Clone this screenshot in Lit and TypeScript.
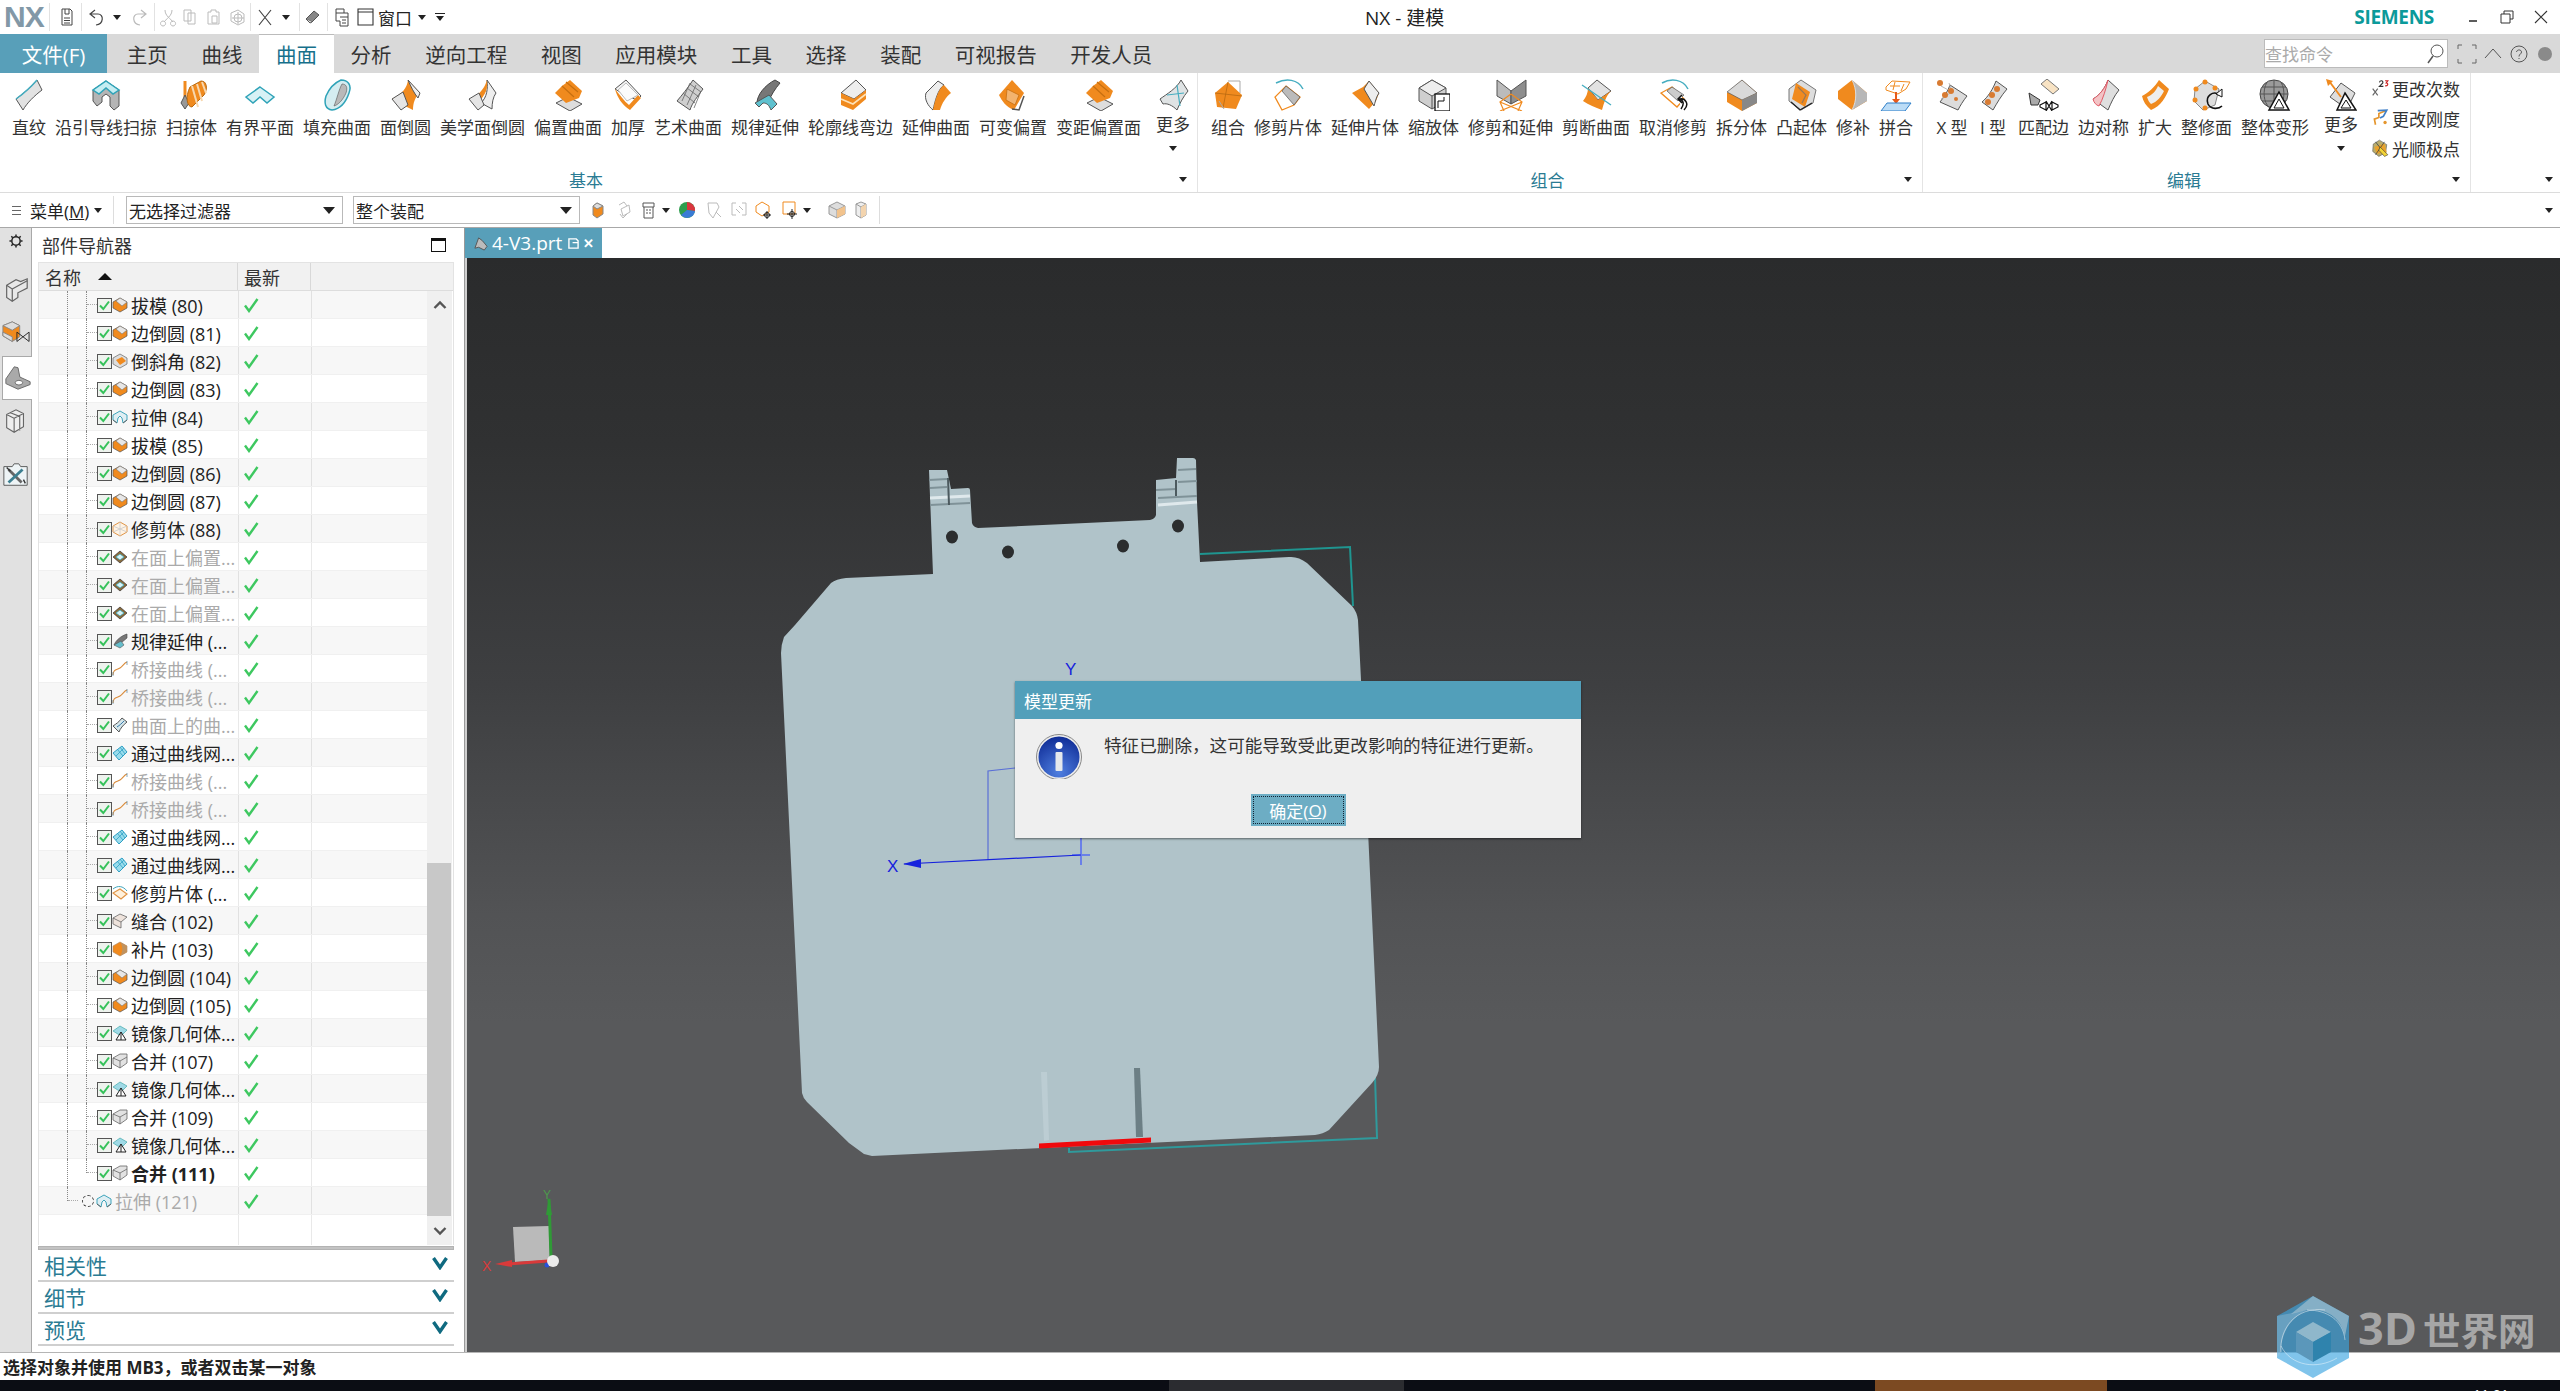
import { LitElement, html, css, svg } from 'lit';
import { customElement } from 'lit/decorators.js';

const O = '#f08a1e';
const D = '#555';
const T = '#45adc0';

// ribbon icons, 32x32
const ICONS: Record<string, any> = {
  ruled: svg`<path d="M24 1L29 11C21 17 14 24 10 31L3 20C10 15 18 8 24 1Z" fill="#e2e2e2" stroke="${D}"/><path d="M24 1C18 8 10 15 3 20" fill="none" stroke="${T}" stroke-width="1.5"/>`,
  guide: svg`<path d="M16 2L29 11V27L24 31L20 27V18L16 15L12 18V23L7 27L3 22V11Z" fill="#b5b5b5" stroke="${D}"/><path d="M16 2L29 11L23 15L16 9L9 15L3 11Z" fill="#c5edf2" stroke="#2fa3b8" stroke-width="1.5"/>`,
  swept: svg`<path d="M9 2V18" stroke="${O}" stroke-width="3"/><path d="M9 16L13 24L9 30L5 24Z" fill="#999" stroke="${D}"/><path d="M14 8L25 2C31 2 32 10 28 16L16 28C11 28 9 18 14 8Z" fill="${O}" stroke="#b96a10"/><path d="M16 7L22 28M21 5L26 22M26 3L30 14" stroke="#f7d7ae" stroke-width="2"/>`,
  plane: svg`<path d="M16 8L30 18L23 24L16 18L9 24L2 18Z" fill="#d7f1f5" stroke="#2fa3b8" stroke-width="1.5"/>`,
  fill: svg`<path d="M20 1C27 1 31 6 28 14C25 23 19 30 11 31C4 30 3 24 5 17C8 10 13 4 20 1Z" fill="#d5edf1" stroke="#2fa3b8" stroke-width="1.5"/><path d="M21 5C25 5 27 8 25 14C22 21 17 26 13 27C16 20 18 10 21 5Z" fill="#b9b9b9" stroke="${D}" stroke-width=".6"/>`,
  faceBlend: svg`<path d="M18 1L30 14C25 18 23 24 23 31L13 26C7 24 4 22 2 20C12 15 17 9 18 1Z" fill="${O}"/><path d="M18 1L30 14L28 19C24 14 21 8 18 1Z" fill="#eee" stroke="${D}"/><path d="M2 20L13 13L18 26L11 31Z" fill="#e5e5e5" stroke="${D}"/>`,
  aesthetic: svg`<path d="M20 1L29 14C26 18 25 24 25 30L14 24C20 18 21 10 20 1Z" fill="#eee" stroke="${D}"/><path d="M20 1C21 10 18 16 14 20L8 18C14 13 18 8 20 1Z" fill="${O}"/><path d="M2 20L12 14L17 26L11 31Z" fill="#e5e5e5" stroke="${D}"/>`,
  offset: svg`<path d="M16 18L30 25L18 32L4 24Z" fill="#ddd" stroke="${D}"/><path d="M18 1L30 12L27 19L14 24L3 14L10 7Z" fill="${O}"/><path d="M10 7L22 18M14 3L26 13" stroke="#c66f10" stroke-width="1.2"/>`,
  thicken: svg`<path d="M14 1L29 17L25 21L13 16L3 10Z" fill="#f4f4f4" stroke="${D}"/><path d="M3 10C5 18 10 26 18 31L29 19L26 16L17 26C12 22 8 16 3 10Z" fill="${O}"/><path d="M14 4L26 16L15 22L6 11Z" fill="#fbfbfb" stroke="#bbb"/>`,
  studio: svg`<path d="M21 1L31 10C26 17 20 24 18 31L5 22C10 16 16 9 21 1Z" fill="#cfcfcf" stroke="${D}"/><path d="M11 14L23 24M15 9L27 18M18 5L29 13M15 26L24 6M10 22L18 4M22 29L29 12" stroke="#666" stroke-width=".8"/>`,
  law: svg`<path d="M26 1L31 4C26 10 22 16 20 22L8 24C8 16 16 6 26 1Z" fill="#777" stroke="#444"/><path d="M6 24L20 16L28 25L22 31C20 26 18 24 14 24L10 28Z" fill="#5fc1cf" stroke="${D}"/>`,
  flange: svg`<path d="M6 14L21 1L31 11L19 20Z" fill="#eee" stroke="${D}"/><path d="M6 14L19 20L31 11V20L18 31L6 26Z" fill="${O}"/><path d="M6 20L18 25L31 15" stroke="#fde2b8" stroke-width="1.6" fill="none"/>`,
  extSurf: svg`<path d="M18 2L6 14C4 20 8 27 13 31C15 22 18 10 24 6Z" fill="#eee" stroke="${D}"/><path d="M24 6L31 14C26 18 22 24 20 31L13 31C15 22 18 10 24 6Z" fill="${O}"/>`,
  variable: svg`<path d="M15 1L27 14L17 31C9 28 5 22 2 16Z" fill="${O}"/><path d="M10 10L22 16L18 26L9 21Z" fill="#f3b36e" stroke="#c66f10" stroke-width=".8"/><path d="M27 17L22 31L15 30" fill="none" stroke="${D}" stroke-width="1.5"/>`,
  more: svg`<path d="M24 1L31 12C26 18 23 24 20 31C15 26 10 24 6 25L3 20C10 15 20 9 24 1Z" fill="#dfe3e4" stroke="${D}"/><path d="M10 16L27 14M20 6L23 27" stroke="${T}" stroke-width="1.2"/>`,
  combine: svg`<path d="M16 2L28 2L28 14" fill="none" stroke="#aaa"/><path d="M16 3L30 16L24 30L5 28L3 14Z" fill="${O}"/><path d="M16 3L11 29M3 14L30 17" stroke="#b96a10" stroke-width=".8"/><path d="M7 22L12 30" stroke="#aaa"/>`,
  trimSheet: svg`<path d="M4 4C14-1 26 0 31 10" fill="none" stroke="${T}" stroke-width="1.5"/><path d="M14 7L28 18L22 26L10 31L3 18Z" fill="#fff" stroke="${O}" stroke-width="1.3"/><path d="M14 7L28 18L22 26L10 12Z" fill="#bbb" stroke="${D}" stroke-width=".7"/>`,
  extSheet: svg`<path d="M20 2L30 14L27 22L20 30L3 14L14 8Z" fill="${O}"/><path d="M20 2L30 14C27 18 26 24 25 27L15 10Z" fill="#eee" stroke="${D}"/>`,
  scale: svg`<path d="M14 1L28 9V22L14 30L1 22V9Z" fill="#cfcfcf" stroke="${D}"/><path d="M14 1L28 9L14 17L1 9Z" fill="#eee" stroke="${D}"/><path d="M14 17V30" stroke="${D}"/><rect x="17" y="15" width="15" height="17" fill="#fff" stroke="#111" stroke-width="1.3"/><path d="M20 29V22H26V18" fill="none" stroke="#111"/>`,
  trimExt: svg`<path d="M16 12L2 1V17L16 25Z" fill="#bbb" stroke="${D}"/><path d="M16 12L31 1V17L16 25Z" fill="#8e8e8e" stroke="${D}"/><path d="M16 15L27 23L23 32M16 15L5 23L9 32M5 23L27 32M27 23L5 32" fill="none" stroke="${O}" stroke-width="1.2"/>`,
  divide: svg`<path d="M17 1L31 12L18 21L8 9Z" fill="#e2e2e2" stroke="${D}"/><path d="M8 9L18 21L31 12C26 17 24 24 22 31C15 28 9 26 3 22C6 18 8 14 8 9Z" fill="${O}"/><path d="M2 6L31 26" stroke="${T}" stroke-width="1.3"/>`,
  untrim: svg`<path d="M5 4C14-1 26 0 31 10" fill="none" stroke="${T}" stroke-width="1.5"/><path d="M15 8L27 20L20 28L4 14Z" fill="#fff" stroke="${O}" stroke-width="1.3"/><path d="M15 8L27 16L21 22L10 12Z" fill="#ccc" stroke="${D}" stroke-width=".7"/><path d="M27 31C33 25 28 19 23 20M25 16L21 20L25 24M22 20C26 21 28 24 24 30" fill="#fff" stroke="#111" stroke-width="1.5"/>`,
  split: svg`<path d="M16 1L31 14V24L16 32L1 23V14Z" fill="${O}"/><path d="M16 1L31 14L16 21L1 13Z" fill="#d9d9d9" stroke="${D}" stroke-width=".7"/><path d="M16 21L31 14V24L16 32Z" fill="#888"/>`,
  emboss: svg`<path d="M15 1L30 11L27 24L15 31L3 22L3 10Z" fill="#ddd" stroke="#777"/><path d="M10 4L24 13L19 28L6 20Z" fill="${O}"/><path d="M12 8L20 16L16 24" fill="none" stroke="#975" stroke-width="1.2"/><path d="M5 23L14 31L26 24" fill="none" stroke="#222" stroke-width="1.4"/>`,
  patch: svg`<path d="M15 1L30 14V22L15 31L1 20V12Z" fill="${O}"/><path d="M15 1L30 14V22L15 31C20 22 20 10 15 1Z" fill="#b7b7b7"/><path d="M15 1C20 10 20 22 15 31" stroke="#ddd" fill="none"/>`,
  stitch: svg`<path d="M6 8L12 2L30 3L26 10L18 15L6 11ZM10 7H20M15 3L13 11M24 5L21 12" fill="#fff" stroke="${O}"/><path d="M16 13V22" stroke="#e85b1b" stroke-width="2"/><path d="M12 20L16 25L20 20Z" fill="#e85b1b"/><path d="M7 24H31L25 32H1Z" fill="#bcdcf6" stroke="#2f7fc8"/>`,
  xform: svg`<path d="M14 6L31 17C27 22 24 27 22 31L4 23C8 18 12 12 14 6Z" fill="#dcdcdc" stroke="${D}"/><path d="M5 7L16 13L5 20M16 13L13 4" fill="none" stroke="#bbb"/><circle cx="4" cy="4" r="3" fill="#d87b32"/><circle cx="15" cy="12" r="3" fill="#d87b32"/><circle cx="9" cy="16" r="3" fill="#d87b32"/><circle cx="20" cy="20" r="2" fill="#d87b32"/>`,
  iform: svg`<path d="M19 2L30 10C24 17 20 24 16 31L5 23C11 18 16 10 19 2Z" fill="#dcdcdc" stroke="${D}"/><circle cx="20" cy="10" r="3" fill="#d87b32"/><circle cx="15" cy="16" r="3" fill="#d87b32"/><circle cx="11" cy="23" r="3" fill="#d87b32"/>`,
  matchEdge: svg`<path d="M13 5L19 0L31 10L25 15Z" fill="#f8e3c4" stroke="#777"/><path d="M1 14L12 21L10 26L3 26Z" fill="#aaa" stroke="#333"/><path d="M12 26L18 23L18 31L12 28ZM30 26L24 23L24 31L30 28ZM18 22L24 32M24 22L18 32" fill="#fff" stroke="#111" stroke-width="1.2"/>`,
  edgeSym: svg`<path d="M20 1L31 11C26 17 23 24 20 31L5 20C12 16 17 9 20 1Z" fill="#dfdfdf" stroke="${D}"/><path d="M20 1C17 9 12 16 5 20C6 24 8 26 11 27C15 20 18 10 20 1Z" fill="#f3c4c6" stroke="#e25c68"/>`,
  enlarge: svg`<path d="M20 1L30 10C27 18 22 27 12 31C7 27 4 22 3 17C9 14 16 8 20 1Z" fill="${O}"/><path d="M19 7L25 12C22 18 18 23 12 25C10 23 9 21 8 18C13 16 17 12 19 7Z" fill="#eee"/>`,
  refit: svg`<path d="M14 2L28 10L24 26L12 31L3 22L4 10Z" fill="#ddd" stroke="#888"/><circle cx="14" cy="3" r="2.5" fill="${O}"/><circle cx="24" cy="9" r="2.5" fill="${O}"/><circle cx="5" cy="10" r="2.5" fill="${O}"/><circle cx="4" cy="21" r="2.5" fill="${O}"/><circle cx="14" cy="29" r="2.5" fill="${O}"/><path d="M29 16C22 11 14 17 17 25C20 31 28 30 31 27" fill="none" stroke="#111" stroke-width="1.6"/><path d="M31 10L25 15L31 18Z" fill="#fff" stroke="#111"/>`,
  deform: svg`<circle cx="15" cy="15" r="14" fill="#9a9a9a" stroke="#444"/><path d="M1 15H29M3 8H27M3 22H27M15 1V29M8 3C3 12 5 24 10 28M22 3C27 12 25 24 20 28" fill="none" stroke="#555"/><path d="M20 13L30 31H10Z" fill="#fff" stroke="#111" stroke-width="1.5"/><path d="M20 20L25 29H15Z" fill="none" stroke="#111"/>`,
  moreEdit: svg`<path d="M16 4L30 14L22 30L5 18Z" fill="#dedede" stroke="${D}"/><path d="M4 2L16 18" stroke="${O}" stroke-width="1.8"/><path d="M1 0L8 2L3 7Z" fill="${O}"/><path d="M20 14L31 31H12Z" fill="#fff" stroke="#111" stroke-width="1.5"/><path d="M21 21L26 29H16Z" fill="none" stroke="#111"/>`,
  // drawn, not lettered: a cross with two small red and dark marks as in the reference glyph
  degree: svg`<path d="M3 17L12 29M12 17L3 29" stroke="#666" stroke-width="2"/><path d="M15 6C16 2 22 2 21 7L15 13H22" fill="none" stroke="#333" stroke-width="2"/><path d="M25 3H30L27 7C31 7 31 13 25 12" fill="none" stroke="#c22" stroke-width="2"/>`,
  stiff: svg`<path d="M26 3L14 8V15L6 18L8 28" fill="none" stroke="#e5962e" stroke-width="3"/><path d="M12 3L28 2L22 13L16 16" fill="none" stroke="#3f7fc7" stroke-width="3"/><circle cx="25" cy="24" r="3" fill="#e5962e"/>`,
  smooth: svg`<path d="M15 2L28 10L26 24L14 31L3 22L4 9Z" fill="#b9ac6c" stroke="#555"/><path d="M6 14L24 8L28 24L10 26Z" fill="#e9a32c"/><path d="M8 5L26 28M24 5L8 28" stroke="#234" stroke-width="1.2"/><path d="M16 14L30 28L24 31L14 20Z" fill="#f2d437" stroke="#333"/>`,
};

// tree node icons, 16x16
const NODE: Record<string, any> = {
  blend: svg`<path d="M8 1L15 5V11L8 15L1 11V5Z" fill="${O}" stroke="#555" stroke-width=".7"/><path d="M8 1L15 5L10 9L4 4Z" fill="#e7e7e7" stroke="#777" stroke-width=".6"/>`,
  chamfer: svg`<path d="M8 1L15 5V11L8 15L1 11V5Z" fill="#ddd" stroke="#666" stroke-width=".7"/><path d="M4 7L10 4L14 8L8 12Z" fill="${O}"/>`,
  extrude: svg`<path d="M8 2L15 6V11L11 14L10 9L8 7L6 9L5 14L1 11V6Z" fill="#dfeef3" stroke="#3ea4bb"/><path d="M1 11L5 14M11 14L15 11" stroke="#666"/>`,
  trimBody: svg`<path d="M8 1L15 5V11L8 15L1 11V5Z" fill="#fff3e4" stroke="#e09445"/><path d="M1 5L15 11M15 5L1 11M8 1V15" stroke="#c9c9c9" stroke-width=".8"/>`,
  offsetFace: svg`<path d="M8 2L15 8L8 14L1 8Z" fill="#8c6a3a" stroke="#333" stroke-width=".7"/><path d="M8 5L12 8L8 11L4 8Z" fill="#d9f3f8" stroke="#2ea9c0" stroke-width=".7"/>`,
  law: svg`<path d="M15 1C9 3 4 7 2 12L9 10L15 5Z" fill="#777" stroke="#444" stroke-width=".6"/><path d="M2 12L9 8L12 12L8 15Z" fill="#65bdcb" stroke="#555" stroke-width=".6"/>`,
  bridge: svg`<path d="M1 14C1 8 5 9 8 7C11 5 12 2 15 1" fill="none" stroke="#d98b3a" stroke-width="1.1"/><path d="M1 15V11M15 4V0" stroke="#58a" stroke-width=".7"/>`,
  curveFace: svg`<path d="M10 1L15 5C11 8 8 12 7 15L1 9C4 7 7 5 10 1Z" fill="#d5e6ea" stroke="#555"/><path d="M5 10C8 8 9 7 12 4" stroke="#37a" fill="none"/>`,
  mesh: svg`<path d="M10 1L15 7L7 15L1 8Z" fill="#9adcec" stroke="#2f9fc4"/><path d="M5 4L11 11M8 2L13 9M4 11L12 3" stroke="#2f9fc4" stroke-width=".8"/>`,
  trimSheet: svg`<path d="M1 4C6 0 11 1 15 6" fill="none" stroke="#3ea4bb"/><path d="M8 4L15 9L9 14L1 8Z" fill="#fff1dc" stroke="#e09445" stroke-width="1.2"/>`,
  sew: svg`<path d="M8 1L15 4L9 9V15L1 11V5Z" fill="#eee3dc" stroke="#666" stroke-width=".8"/><path d="M1 5L9 9" stroke="#666" stroke-width=".8"/>`,
  patch: svg`<path d="M8 1L15 5V11L8 15L1 11V5Z" fill="${O}" stroke="#a86" stroke-width=".6"/><path d="M8 1C11 5 11 11 8 15L15 11V5Z" fill="#c0925e"/>`,
  mirror: svg`<path d="M8 1L15 5L9 11L1 6Z" fill="#9fd9e6" stroke="#4aa" stroke-width=".7"/><path d="M9 7L14 15H4Z" fill="#fff" stroke="#222"/><path d="M9 7V15" stroke="#222"/>`,
  unite: svg`<path d="M1 5L8 1H15V10L8 15L1 11Z" fill="#e2e2e2" stroke="#666" stroke-width=".8"/><path d="M1 5L8 8L15 4M8 8V15" fill="none" stroke="#666" stroke-width=".8"/>`,
};

const TREE: [string, string, string?][] = [
  ['拔模 (80)', 'blend'], ['边倒圆 (81)', 'blend'], ['倒斜角 (82)', 'chamfer'], ['边倒圆 (83)', 'blend'],
  ['拉伸 (84)', 'extrude'], ['拔模 (85)', 'blend'], ['边倒圆 (86)', 'blend'], ['边倒圆 (87)', 'blend'],
  ['修剪体 (88)', 'trimBody'], ['在面上偏置...', 'offsetFace', 'ghost'], ['在面上偏置...', 'offsetFace', 'ghost'],
  ['在面上偏置...', 'offsetFace', 'ghost'], ['规律延伸 (...', 'law'], ['桥接曲线 (...', 'bridge', 'ghost'],
  ['桥接曲线 (...', 'bridge', 'ghost'], ['曲面上的曲...', 'curveFace', 'ghost'], ['通过曲线网...', 'mesh'],
  ['桥接曲线 (...', 'bridge', 'ghost'], ['桥接曲线 (...', 'bridge', 'ghost'], ['通过曲线网...', 'mesh'],
  ['通过曲线网...', 'mesh'], ['修剪片体 (...', 'trimSheet'], ['缝合 (102)', 'sew'], ['补片 (103)', 'patch'],
  ['边倒圆 (104)', 'blend'], ['边倒圆 (105)', 'blend'], ['镜像几何体...', 'mirror'], ['合并 (107)', 'unite'],
  ['镜像几何体...', 'mirror'], ['合并 (109)', 'unite'], ['镜像几何体...', 'mirror'], ['合并 (111)', 'unite', 'bold'],
];

type Tool = [string, string];
const RIBBON: { label: string; width: number; pad: number; tools: Tool[] }[] = [
  {
    label: '基本', width: 1198, pad: 12,
    tools: [['直纹', 'ruled'], ['沿引导线扫掠', 'guide'], ['扫掠体', 'swept'], ['有界平面', 'plane'], ['填充曲面', 'fill'],
      ['面倒圆', 'faceBlend'], ['美学面倒圆', 'aesthetic'], ['偏置曲面', 'offset'], ['加厚', 'thicken'], ['艺术曲面', 'studio'],
      ['规律延伸', 'law'], ['轮廓线弯边', 'flange'], ['延伸曲面', 'extSurf'], ['可变偏置', 'variable'], ['变距偏置面', 'offset'],
      ['更多', 'more']],
  },
  {
    label: '组合', width: 725, pad: 13,
    tools: [['组合', 'combine'], ['修剪片体', 'trimSheet'], ['延伸片体', 'extSheet'], ['缩放体', 'scale'], ['修剪和延伸', 'trimExt'],
      ['剪断曲面', 'divide'], ['取消修剪', 'untrim'], ['拆分体', 'split'], ['凸起体', 'emboss'], ['修补', 'patch'], ['拼合', 'stitch']],
  },
  {
    label: '编辑', width: 548, pad: 13,
    tools: [['X 型', 'xform'], ['I 型', 'iform'], ['匹配边', 'matchEdge'], ['边对称', 'edgeSym'], ['扩大', 'enlarge'],
      ['整修面', 'refit'], ['整体变形', 'deform'], ['更多', 'moreEdit']],
  },
];

const TABS = ['主页', '曲线', '曲面', '分析', '逆向工程', '视图', '应用模块', '工具', '选择', '装配', '可视报告', '开发人员'];

// quick access bar: margin before, drawing
const QUICK: [number, any][] = [
  [6, 'sep'],
  [7, svg`<path d="M5 2H13L15 4V18H5ZM8 2V7H12V2M7 11H13M7 13.5H13M7 16H13" fill="none" stroke="#444"/>`],
  [4, 'sep'],
  [4, svg`<path d="M5 7H12C18 7 18 17 10 18M9 3L4 7L9 11" fill="none" stroke="#444" stroke-width="1.2"/>`],
  [6, 'arrow'],
  [8, svg`<path d="M15 7H8C2 7 2 17 10 18M11 3L16 7L11 11" fill="none" stroke="#bbb" stroke-width="1.2"/>`],
  [4, 'sep'],
  [3, svg`<path d="M7 3C7 9 13 12 15 15M14 3C14 9 8 12 6 15M5 14A2.5 2.5 0 1 0 5.1 14M15 14A2.5 2.5 0 1 0 15.1 14" fill="none" stroke="#bbb"/>`],
  [2, svg`<path d="M4 3H11V14H4ZM8 6H15V17H8Z" fill="#fff" stroke="#bbb"/>`],
  [4, svg`<path d="M7 3H12V5H15V17H4V5H7ZM8 9H13V16H8Z" fill="#fff" stroke="#bbb"/>`],
  [4, svg`<path d="M3 6L10 3L16 7V15L10 18L3 14Z" fill="#fff" stroke="#bbb"/><circle cx="10" cy="11" r="4" fill="none" stroke="#bbb"/><path d="M4 11H16M10 5V17" stroke="#bbb"/>`],
  [2, 'sep'],
  [4, svg`<path d="M4 3L16 18M16 3L4 18" stroke="#444" stroke-width="1.2"/>`],
  [6, 'arrow'],
  [8, 'sep'],
  [3, svg`<path d="M3 12L11 4L16 8L9 15Z" fill="#888" stroke="#555"/><path d="M3 12L7 16L9 15" fill="#ddd" stroke="#555"/>`],
  [4, 'sep'],
  [4, svg`<path d="M4 2H12V6H16V19H8V14H4ZM4 6H12M8 10H16M10 13H14M10 16H14" fill="none" stroke="#444"/>`],
  [3, svg`<path d="M3 2H18V18H3ZM3 5H18" fill="none" stroke="#333" stroke-width="1.1"/>`],
];

const SEL_ICONS: [number, any][] = [
  [8, svg`<path d="M9 3L15 6V14L9 18L5 15V6Z" fill="${O}" stroke="#888"/><path d="M9 3L15 6L9 9L5 6Z" fill="#ddd" stroke="#888"/>`],
  [7, svg`<path d="M4 5L9 2L12 6M12 14L8 18L5 14M6 9L14 5L15 12L8 16Z" fill="none" stroke="#bbb"/>`],
  [4, svg`<path d="M4 3H15V7H4ZM5 7V18H14V7M7 10H9M10 10H12M7 13H9M10 13H12" fill="none" stroke="#555"/>`],
  [2, 'arrow'],
  [6, svg`<circle cx="10" cy="10" r="8" fill="#2e9e4e"/><path d="M10 10V2A8 8 0 0 1 18 11Z" fill="#d9363e"/><path d="M10 10L18 11A8 8 0 0 1 4 15Z" fill="#3a7bd5"/>`],
  [7, svg`<path d="M4 3H13L15 7L9 18L5 13ZM12 12L17 17" fill="none" stroke="#bbb"/>`],
  [5, svg`<path d="M3 3H7M3 3V15H7M13 3H17V15H13M7 9L11 13M10 6L14 10" fill="none" stroke="#bbb"/>`],
  [5, svg`<path d="M8 2L15 6V12L8 16L2 12V6Z" fill="#fff" stroke="${O}"/><path d="M13 11V19M9 15H17" stroke="#222"/><circle cx="13" cy="15" r="2.5" fill="none" stroke="#222"/>`],
  [6, svg`<path d="M3 2H15V14H3Z" fill="#fff" stroke="${O}"/><path d="M12 9V19M7 14H17" stroke="#222"/><circle cx="12" cy="14" r="2.5" fill="none" stroke="#222"/>`],
  [2, 'arrow'],
  [15, svg`<path d="M10 2L18 6V14L10 18L2 14V6Z" fill="#ddd" stroke="#999"/><path d="M2 6L10 10L18 6M10 10V18" fill="none" stroke="#999"/><path d="M10 10L18 6V14L10 18Z" fill="#f2c38d"/>`],
  [4, svg`<path d="M5 4L10 2L15 4V15L10 18L5 15Z" fill="#eee" stroke="#999"/><path d="M5 4L10 7L15 4M10 7V18" fill="none" stroke="#999"/><path d="M10 7L15 4V15L10 18Z" fill="#f3d4ae"/>`],
];

const RAIL: [string, any][] = [
  ['gear', svg`<circle cx="15" cy="15" r="4.5" fill="none" stroke="#222" stroke-width="1.6"/><path d="M15 8V10M15 20V22M8 15H10M20 15H22M10 10L11.5 11.5M18.5 18.5L20 20M20 10L18.5 11.5M10 20L11.5 18.5" stroke="#222" stroke-width="1.6"/>`],
  ['', svg`<path d="M5 10L15 4L20 6L27 3V13L17 18V23L11 27L5 23Z" fill="#e8e8e8" stroke="#666" stroke-width="1.3"/><path d="M5 10L11 14V27M11 14L27 5" fill="none" stroke="#666" stroke-width="1.3"/>`],
  ['', svg`<path d="M11 2L19 6V18L11 23L1 17V6Z" fill="${O}" stroke="#888"/><path d="M11 2L19 6L11 11L1 6Z" fill="#ddd" stroke="#888"/><path d="M1 13L11 18V23L1 17Z" fill="#ddd" stroke="#888"/><path d="M16 13L29 23M16 23L29 13M16 13V23M29 13V23" stroke="#222" fill="#fff"/>`],
  ['on', svg`<path d="M11 3L15 4L17 14L28 19V22L15 27L2 21V16Z" fill="#a9a9a9" stroke="#666"/><ellipse cx="16" cy="20" rx="4" ry="2.5" fill="#fff" stroke="#666"/>`],
  ['', svg`<path d="M5 7L15 2L23 6V20L13 26L5 21ZM5 7L13 11V26M9 5L19 9V24M13 11L23 6" fill="#eee" stroke="#666" stroke-width="1.2"/>`],
  ['', svg`<path d="M2 6H11L13 3H18L20 6H27V26H2Z" fill="#eef4f6" stroke="#555"/><path d="M7 9L21 23" stroke="#666" stroke-width="3"/><path d="M22 9L7 23" stroke="#3d7f90" stroke-width="3"/><path d="M5 7L9 11M23 20L25 24" stroke="#333" stroke-width="1.5"/>`],
];

@customElement('app-root')
export class AppRoot extends LitElement {
  static styles = css`
    :host {
      display: block;
      position: relative;
      width: 2560px;
      height: 1391px;
      overflow: hidden;
      background: #fff;
      color: #222;
      font-family: 'Open Sans', 'Noto Sans CJK SC', sans-serif;
      font-size: 17px;
    }

    /* title bar */
    .title {
      height: 34px;
      display: flex;
      align-items: center;
    }
    .logo {
      width: 43px;
      padding-left: 4px;
      box-sizing: border-box;
      font: 700 30px 'Liberation Sans Narrow', 'Liberation Sans', sans-serif;
      color: #8298a7;
      letter-spacing: -1px;
    }
    .qsep { width: 1px; height: 28px; background: #e2e2e2; }
    .qico { width: 20px; height: 20px; display: block; }
    .arrow {
      width: 0;
      height: 0;
      border-left: 4px solid transparent;
      border-right: 4px solid transparent;
      border-top: 5px solid #222;
    }
    .qarrow { width: 10px; display: flex; justify-content: center; }
    .wintext { margin-left: 3px; font-size: 17px; }
    .caption { margin-left: 920px; font-size: 19px; color: #222; }
    .siemens {
      margin-left: auto;
      font: 700 19px 'Open Sans', sans-serif;
      color: #0b9a9a;
      letter-spacing: -0.3px;
    }
    .winbtn { width: 34px; display: flex; justify-content: center; align-items: center; color: #333; }
    .winbtns { display: flex; margin-left: 22px; margin-right: 2px; }

    /* tabs */
    .tabs {
      height: 39px;
      background: #d9d9d9;
      display: flex;
      align-items: stretch;
      font-size: 20.5px;
    }
    .file {
      width: 107px;
      margin-right: 3px;
      background: #589fb9;
      color: #fff;
      display: flex;
      align-items: center;
      justify-content: center;
    }
    .tab { padding: 0 16.8px; display: flex; align-items: center; color: #333; }
    .tab.on { background: #fff; color: #16708b; border-top: 1px solid #bbb; }
    .search {
      margin-left: auto;
      margin-top: 5px;
      width: 184px;
      height: 29px;
      box-sizing: border-box;
      background: #fff;
      border: 1px solid #bbb;
      font-size: 17px;
      color: #aaa;
      display: flex;
      align-items: center;
      justify-content: space-between;
      padding-right: 2px;
    }
    .tabicons { display: flex; align-items: center; gap: 4px; padding: 0 4px 0 8px; }
    .tabicons svg { width: 22px; height: 22px; display: block; }

    /* ribbon */
    .ribbon {
      height: 119px;
      display: flex;
      border-bottom: 1px solid #dcdcdc;
    }
    .group {
      box-sizing: border-box;
      display: flex;
      flex-direction: column;
      border-right: 1px solid #e4e4e4;
    }
    .group:last-child { border-right: none; flex: 1; justify-content: flex-end; }
    .tools { flex: 1; min-height: 0; display: flex; gap: 9px; }
    .tool {
      display: flex;
      flex-direction: column;
      align-items: center;
      white-space: nowrap;
      color: #333;
      line-height: 22px;
    }
    .tool svg { width: 32px; height: 32px; margin: 6px 0 6px; display: block; }
    .tool.more { margin-left: 6px; }
    .tool.more .lbl { margin-top: -3px; }
    .tool .arrow { margin-top: 10px; }
    .small { margin-left: 4px; display: flex; flex-direction: column; }
    .small div { height: 30px; display: flex; align-items: center; gap: 3px; color: #333; white-space: nowrap; }
    .small svg { width: 18px; height: 18px; }
    .foot { height: 24px; flex: none; display: flex; align-items: center; margin-top: -1px; margin-bottom: 1px; }
    .gname { flex: 1; text-align: center; color: #2a7b93; }
    .corner { width: 22px; display: flex; justify-content: center; margin-right: 3px; }
    .group:last-child .corner { margin-right: 0; }

    /* selection bar */
    .selbar {
      height: 34px;
      display: flex;
      align-items: center;
      border-bottom: 1px solid #a8a8a8;
    }
    .menu { padding-left: 12px; display: flex; align-items: center; width: 114px; box-sizing: border-box; border-right: 1px solid #ddd; height: 28px; gap: 5px; }
    .burger { width: 9px; height: 9px; border-top: 1px solid #666; border-bottom: 1px solid #666; position: relative; box-sizing: border-box; margin-right: 4px; }
    .burger::after { content: ''; position: absolute; left: 0; right: 0; top: 3px; border-top: 1px solid #666; }
    .combo {
      box-sizing: border-box;
      height: 28px;
      margin-left: 12px;
      padding: 0 7px 0 2px;
      background: #fff;
      border: 1px solid #b9b9b9;
      display: flex;
      align-items: center;
      justify-content: space-between;
    }
    .tri { border-left: 6px solid transparent; border-right: 6px solid transparent; border-top: 7px solid #222; }
    .combo.a { width: 217px; }
    .combo.b { width: 227px; margin-left: 10px; }
    .selico { width: 20px; height: 20px; display: block; }
    .seltail { margin-left: auto; margin-right: 7px; }
    .selsep { width: 1px; height: 28px; background: #ddd; margin-left: 8px; }

    /* main area */
    .main { height: 1124px; display: flex; }
    .rail {
      width: 32px;
      flex: none;
      box-sizing: border-box;
      background: #e1e1e1;
      border-right: 1px solid #a9a9a9;
      display: flex;
      flex-direction: column;
    }
    .railitem { display: flex; align-items: center; justify-content: center; height: 44px; flex: none; }
    .railitem svg { width: 28px; height: 28px; }
    .railitem.gear { height: 26px; margin-bottom: 14px; }
    .railitem:nth-child(6) { margin-top: 9px; }
    .railitem.on { background: #fff; border: 1px solid #a9a9a9; border-right: none; margin: 0 -1px 0 2px; position: relative; box-sizing: border-box; }

    .panel {
      width: 433px;
      flex: none;
      box-sizing: border-box;
      padding: 0 10px 0 6px;
      border-right: 1px solid #999;
      display: flex;
      flex-direction: column;
    }
    .ptitle { height: 34px; flex: none; box-sizing: border-box; display: flex; align-items: center; justify-content: space-between; padding: 0 8px 0 4px; font-size: 18px; color: #333; }
    .maxbox { width: 15px; height: 14px; border: 1.5px solid #111; border-top-width: 3px; box-sizing: border-box; }

    .table {
      height: 983px;
      flex: none;
      display: grid;
      grid-template-columns: 1fr 26px;
      grid-template-rows: 28px 1fr;
      border: 1px solid #e3e3e3;
      border-bottom: none;
      font-size: 18px;
      box-sizing: border-box;
    }
    .thead {
      grid-column: 1 / 3;
      display: grid;
      grid-template-columns: 199px 73px 1fr;
      background: #f1f1f1;
      border-bottom: 1px solid #ddd;
      color: #333;
    }
    .thead > div { display: flex; align-items: center; padding-left: 6px; border-right: 1px solid #d8d8d8; }
    .thead > div:last-child { border-right: none; }
    .sort { margin-left: 17px; border-left: 7px solid transparent; border-right: 7px solid transparent; border-bottom: 7px solid #111; }

    .rows {
      display: flex;
      flex-direction: column;
      background: linear-gradient(#e9e9e9, #e9e9e9) 199px 0 / 1px 100% no-repeat,
        linear-gradient(#e9e9e9, #e9e9e9) 272px 0 / 1px 100% no-repeat, #fff;
    }
    .row {
      height: 28px;
      flex: none;
      box-sizing: border-box;
      display: grid;
      grid-template-columns: 199px 73px 1fr;
      border-bottom: 1px solid #f0f0f0;
    }
    .row:nth-child(odd) { background: rgba(0, 0, 0, 0.03); }
    .name { display: flex; align-items: center; white-space: nowrap; overflow: hidden; height: 28px; }
    .pad { width: 28px; flex: none; }
    .g1, .g2 { flex: none; height: 28px; box-sizing: border-box; border-left: 1px dotted #888; }
    .g1 { width: 19px; }
    .g2 { width: 11px; position: relative; }
    .g2::after, .g1.end::after {
      content: '';
      position: absolute;
      left: 0;
      top: 13px;
      width: 10px;
      border-top: 1px dotted #aaa;
    }
    .g2.end, .g1.end { height: 14px; align-self: flex-start; position: relative; }
    .check { width: 15px; height: 15px; flex: none; }
    .node { width: 16px; height: 16px; flex: none; }
    .txt { margin-left: 3px; color: #222; }
    .ghost .txt { color: #aaa; }
    .bold .txt { font-weight: 700; color: #222; }
    .ok { display: flex; align-items: center; padding-left: 5px; }
    .ok svg { width: 16px; height: 16px; }
    .hollow { width: 12px; height: 12px; border-radius: 50%; border: 1px dashed #444; margin: 0 2px 0 -4px; flex: none; box-sizing: border-box; }

    .scroll { background: #f0f0f0; display: flex; flex-direction: column; align-items: center; margin-right: 1px; }
    .sbtn { height: 28px; flex: none; display: flex; align-items: center; justify-content: center; }
    .sbtn svg { width: 14px; height: 10px; }
    .track { flex: 1; width: 100%; padding-top: 544px; box-sizing: border-box; }
    .thumb { height: 353px; background: #c8c8c8; width: 24px; }

    .split { height: 4px; flex: none; background: #c3c3c3; border: 1px solid #b3b3b3; box-sizing: border-box; margin-top: 1px; }
    .sect {
      height: 32px;
      flex: none;
      box-sizing: border-box;
      border-bottom: 2px solid #cfcfcf;
      display: flex;
      align-items: center;
      justify-content: space-between;
      padding: 0 6px;
      font-size: 21px;
      color: #2a7b93;
    }
    .sect svg { width: 16px; height: 14px; margin-top: -4px; }

    /* graphics window */
    .work { flex: 1; display: flex; flex-direction: column; min-width: 0; }
    .tabstrip { height: 30px; flex: none; display: flex; }
    .doc {
      width: 137px;
      background: #589fb9;
      color: #fff;
      font-size: 19px;
      display: flex;
      align-items: center;
      padding-left: 8px;
      box-sizing: border-box;
      gap: 4px;
      white-space: nowrap;
    }
    .doc svg { width: 15px; height: 15px; flex: none; }
    .doc .pin { width: 11px; height: 11px; margin-left: 2px; }
    .doc .x { font-size: 13px; font-weight: 700; }
    .view {
      flex: 1;
      position: relative;
      border-left: 2px solid #cfcfcf;
      background: linear-gradient(#2a2b2c 0%, #303132 17%, #3e3f41 39%, #525355 60%, #58595b 70%, #58595b 100%);
    }
    .scene { display: block; width: 2093px; height: 1094px; }
    .scene text { font-family: 'Liberation Sans', sans-serif; }

    /* dialog */
    .dialog {
      position: absolute;
      left: 548px;
      top: 423px;
      width: 566px;
      height: 157px;
      background: #efefef;
      box-shadow: 0 1px 2px rgba(0, 0, 0, 0.5);
      display: flex;
      flex-direction: column;
    }
    .dhead { height: 38px; flex: none; background: #529fba; color: #fff; display: flex; align-items: center; padding: 0 9px; font-size: 17px; }
    .dmsg { display: flex; box-sizing: border-box; padding: 14px 0 0 21px; gap: 22px; font-size: 17.6px; color: #333; height: 61px; }
    .dmsg svg { width: 46px; height: 46px; flex: none; }
    .dmsg span { white-space: nowrap; margin-top: -1px; }
    .dfoot { display: flex; justify-content: center; margin-top: 14px; }
    .dbtn {
      width: 95px;
      height: 32px;
      box-sizing: border-box;
      background: #6dadc4;
      color: #fff;
      outline: 1px dotted #123;
      outline-offset: -3px;
      display: flex;
      align-items: center;
      justify-content: center;
      font-size: 17px;
    }

    /* bottom */
    .status {
      height: 28px;
      box-sizing: border-box;
      border-top: 1px solid #b5b5b5;
      display: flex;
      align-items: center;
      padding-left: 3px;
      font-size: 17px;
      font-weight: 700;
      color: #222;
    }
    .task { height: 11px; background: #0b0d14; overflow: hidden; display: flex; }
    .task .a { margin-left: 1169px; width: 235px; background: #2b2c30; }
    .task .b { margin-left: 471px; width: 232px; background: #7c4a22; }
    .task .clock { margin-left: 366px; color: #fff; font-size: 14px; line-height: 22px; padding-top: 4px; }

    .mark {
      position: absolute;
      left: 2277px;
      top: 1296px;
      display: flex;
      pointer-events: none;
    }
    .mark svg { width: 72px; height: 82px; display: block; }
    .mark .wm {
      margin: 10px 0 0 9px;
      height: 44px;
      line-height: 44px;
      font-size: 37.5px;
      font-weight: 700;
      color: #a6a6a6;
      white-space: nowrap;
    }
    .mark .wm b { font-size: 45px; font-weight: 700; margin-right: 6px; }
  `;

  toolEl(t: Tool) {
    const more = t[0] === '更多';
    return html`<div class="tool ${more ? 'more' : ''}">
      <svg viewBox="0 0 32 32">${ICONS[t[1]]}</svg>
      <span class="lbl">${t[0]}</span>
      ${more ? html`<span class="arrow"></span>` : ''}
    </div>`;
  }

  ribbonEl() {
    return html`<div class="ribbon">
      ${RIBBON.map((g, i) => html`<div class="group" style="width:${g.width}px">
        <div class="tools" style="padding-left:${g.pad}px">
          ${g.tools.map((t) => this.toolEl(t))}
          ${i === 2 ? html`<div class="small">
            <div><svg viewBox="0 0 32 32">${ICONS.degree}</svg>更改次数</div>
            <div><svg viewBox="0 0 32 32">${ICONS.stiff}</svg>更改刚度</div>
            <div><svg viewBox="0 0 32 32">${ICONS.smooth}</svg>光顺极点</div>
          </div>` : ''}
        </div>
        <div class="foot"><span class="gname">${g.label}</span><span class="corner"><span class="arrow"></span></span></div>
      </div>`)}
      <div class="group"><div class="foot"><span class="gname"></span><span class="corner"><span class="arrow"></span></span></div></div>
    </div>`;
  }

  checkEl() {
    return html`<svg class="check" viewBox="0 0 15 15"><rect x=".5" y=".5" width="14" height="14" fill="#eef3ee" stroke="#555"/><path d="M3 7.5L6.3 11L12 3.5" fill="none" stroke="#35c25a" stroke-width="2"/></svg>`;
  }

  okEl() {
    return html`<div class="ok"><svg viewBox="0 0 16 16"><path d="M2 8.5L6 14L14.5 2" fill="none" stroke="#3ec860" stroke-width="2.4"/></svg></div>`;
  }

  treeEl() {
    return html`<div class="rows">
      ${TREE.map((r, i) => html`<div class="row ${r[2] ?? ''}">
        <div class="name">
          <span class="pad"></span><span class="g1"></span>
          <span class="g2 ${i === TREE.length - 1 ? 'end' : ''}"></span>
          ${this.checkEl()}
          <svg class="node" viewBox="0 0 16 16">${NODE[r[1]]}</svg>
          <span class="txt">${r[0]}</span>
        </div>
        ${this.okEl()}
        <div></div>
      </div>`)}
      <div class="row ghost">
        <div class="name">
          <span class="pad"></span><span class="g1 end"></span>
          <span class="hollow"></span>
          <svg class="node" viewBox="0 0 16 16">${NODE.extrude}</svg>
          <span class="txt">拉伸 (121)</span>
        </div>
        ${this.okEl()}
        <div></div>
      </div>
    </div>`;
  }

  navigatorEl() {
    const chevron = html`<svg viewBox="0 0 16 14"><path d="M1.5 2L8 11.5L14.5 2" fill="none" stroke="#0f6a80" stroke-width="3.4"/></svg>`;
    return html`<div class="panel">
      <div class="ptitle"><span>部件导航器</span><span class="maxbox"></span></div>
      <div class="table">
        <div class="thead">
          <div>名称<span class="sort"></span></div><div>最新</div><div></div>
        </div>
        ${this.treeEl()}
        <div class="scroll">
          <div class="sbtn"><svg viewBox="0 0 14 10"><path d="M1.5 8L7 2.5L12.5 8" fill="none" stroke="#555" stroke-width="2.4"/></svg></div>
          <div class="track"><div class="thumb"></div></div>
          <div class="sbtn"><svg viewBox="0 0 14 10"><path d="M1.5 2L7 7.5L12.5 2" fill="none" stroke="#555" stroke-width="2.4"/></svg></div>
        </div>
      </div>
      <div class="split"></div>
      <div class="sect"><span>相关性</span>${chevron}</div>
      <div class="sect"><span>细节</span>${chevron}</div>
      <div class="sect"><span>预览</span>${chevron}</div>
    </div>`;
  }

  // coordinates here are page pixels, the viewBox starts at the view's corner
  sceneEl() {
    return html`<svg class="scene" viewBox="467 258 2093 1094">
      <path d="M1200 554L1350 547L1353 606" fill="none" stroke="#1f9590" stroke-width="2"/>
      <path d="M1375 1077L1377 1138L1069 1152L1069 1148" fill="none" stroke="#2f9a9c" stroke-width="2"/>
      <path d="M933 574L846 578Q836 579 831 583L795 625L784 637Q781 645 781 653L802 1093Q803 1098 807 1102L849 1143L864 1154L872 1156L1315 1135Q1323 1134 1329 1130L1372 1083Q1379 1075 1379 1067L1361 680L1358 620Q1357 612 1352 606L1307 563Q1298 556 1289 557L1200 562L1197 502L1196 460Q1195 458 1193 458L1177 458L1176 478L1156 480L1156 515Q1155 519 1150 520L978 528Q973 527 972 523L970 490Q970 488 968 488L951 489L947 470L929 470Z" fill="#b0c3c9"/>
      <path d="M929 480L947 479M930 488L947 487M930 505L970 503M1156 490L1176 489M1178 470L1196 469M1158 498L1197 496M1178 482L1197 481" stroke="#7f9298" stroke-width="2" fill="none"/>
      <path d="M930 498L970 496M1158 505L1197 502" stroke="#dfe9ec" stroke-width="3" fill="none"/>
      <path d="M948 478L949 505M1176 480L1176 496" stroke="#4c5a5f" stroke-width="2"/>
      ${[[952, 537], [1008, 552], [1123, 546], [1178, 526]].map((h) => svg`<ellipse cx="${h[0]}" cy="${h[1]}" rx="6" ry="6.5" fill="#2b2d2e"/>`)}
      <path d="M1134 1068H1140L1143 1137H1136Z" fill="#6c7f85"/>
      <path d="M1041 1072H1047L1049 1140L1044 1141Z" fill="#bccdd3"/>
      <path d="M1039 1143.5L1151 1137.5V1142.5L1039 1148.5Z" fill="#f0090c"/>
      <path d="M1015 768L988 771V860" fill="none" stroke="#5a6fd6" stroke-width="1.2"/>
      <path d="M1081 838V865M1072 855H1090" stroke="#6a80e8" stroke-width="2"/>
      <path d="M1081 855L904 864" stroke="#1622dd" stroke-width="1.2"/>
      <path d="M903 864L921 859L921 868Z" fill="#1622dd"/>
      <text x="887" y="872" font-size="17" fill="#1622dd">X</text>
      <text x="1065" y="675" font-size="17" fill="#1622dd">Y</text>
      <path d="M513 1227L549 1226L550 1260L515 1262Z" fill="#bababa"/>
      <path d="M551 1257L549 1199" stroke="#2f9a36" stroke-width="3"/>
      <path d="M546 1215L549 1197L552 1215Z" fill="#2f9a36"/>
      <text x="543" y="1199" font-size="12" fill="#4c9a4c">Y</text>
      <path d="M548 1261L508 1264" stroke="#d83a3a" stroke-width="3"/>
      <path d="M495 1264L512 1260V1267Z" fill="#d83a3a"/>
      <text x="482" y="1271" font-size="14" fill="#d83a3a">X</text>
      <circle cx="547" cy="1265" r="2.5" fill="#2950d8"/>
      <circle cx="553" cy="1261" r="6" fill="#ececec"/>
    </svg>`;
  }

  dialogEl() {
    return html`<div class="dialog">
      <div class="dhead">模型更新</div>
      <div class="dmsg">
        <svg viewBox="0 0 46 46">
          <defs><radialGradient id="ib" cx=".5" cy=".85" r=".8"><stop offset="0" stop-color="#4f7fe0"/><stop offset="1" stop-color="#12309a"/></radialGradient></defs>
          <circle cx="23" cy="24" r="21.5" fill="url(#ib)" stroke="#eee" stroke-width="2"/>
          <circle cx="23" cy="24" r="22.5" fill="none" stroke="#888"/>
          <circle cx="23" cy="12.5" r="3.6" fill="#fff"/>
          <rect x="19.5" y="19" width="7" height="19" rx="1" fill="#e4e8ec"/>
        </svg>
        <span>特征已删除，这可能导致受此更改影响的特征进行更新。</span>
      </div>
      <div class="dfoot"><div class="dbtn">确定(<u>O</u>)</div></div>
    </div>`;
  }

  render() {
    return html`
      <div class="title">
        <div class="logo">NX</div>
        ${QUICK.map((q) => q[1] === 'sep'
          ? html`<span class="qsep" style="margin-left:${q[0]}px"></span>`
          : q[1] === 'arrow'
            ? html`<span class="qarrow" style="margin-left:${q[0]}px"><span class="arrow"></span></span>`
            : html`<svg class="qico" style="margin-left:${q[0]}px" viewBox="0 0 20 20">${q[1]}</svg>`)}
        <span class="wintext">窗口</span>
        <span class="qarrow" style="margin-left:5px"><span class="arrow"></span></span>
        <span class="qarrow" style="margin-left:8px;border-top:1px solid #222;padding-top:2px"><span class="arrow"></span></span>
        <span class="caption">NX - 建模</span>
        <span class="siemens">SIEMENS</span>
        <div class="winbtns">
          <span class="winbtn"><svg width="14" height="14" viewBox="0 0 14 14"><path d="M3 11H11" stroke="#333" stroke-width="1.6"/></svg></span>
          <span class="winbtn"><svg width="14" height="14" viewBox="0 0 14 14"><path d="M4 4V1H13V9H10M1 4H10V13H1Z" fill="none" stroke="#333"/></svg></span>
          <span class="winbtn"><svg width="14" height="14" viewBox="0 0 14 14"><path d="M1 1L13 13M13 1L1 13" stroke="#333" stroke-width="1.1"/></svg></span>
        </div>
      </div>

      <div class="tabs">
        <div class="file">文件(F)</div>
        ${TABS.map((t) => html`<div class="tab ${t === '曲面' ? 'on' : ''}">${t}</div>`)}
        <div class="search">查找命令
          <svg width="20" height="24" viewBox="0 0 20 24"><circle cx="12" cy="9" r="6" fill="none" stroke="#555"/><path d="M8 14L3 21" stroke="#555" stroke-width="1.5"/></svg>
        </div>
        <div class="tabicons">
          <svg viewBox="0 0 22 22"><path d="M2 6V2H6M16 2H20V6M20 16V20H16M6 20H2V16" fill="none" stroke="#666"/></svg>
          <svg viewBox="0 0 22 22"><path d="M3 15L11 6L19 15" fill="none" stroke="#555"/></svg>
          <svg viewBox="0 0 22 22"><circle cx="11" cy="11" r="8" fill="none" stroke="#555"/><path d="M8.5 9C9 6 13.5 6.5 13.5 9C13.5 11 11 11 11 13.5M11 15V16" fill="none" stroke="#555"/></svg>
          <svg viewBox="0 0 22 22"><circle cx="11" cy="11" r="7" fill="#8a8a8a"/></svg>
        </div>
      </div>

      ${this.ribbonEl()}

      <div class="selbar">
        <div class="menu"><span class="burger"></span><span>菜单(<u>M</u>)</span><span class="arrow"></span></div>
        <div class="combo a">无选择过滤器<span class="tri"></span></div>
        <div class="combo b">整个装配<span class="tri"></span></div>
        ${SEL_ICONS.map((s) => s[1] === 'arrow'
          ? html`<span class="qarrow" style="margin-left:${s[0]}px"><span class="arrow"></span></span>`
          : html`<svg class="selico" style="margin-left:${s[0]}px" viewBox="0 0 20 20">${s[1]}</svg>`)}
        <span class="selsep"></span>
        <span class="arrow seltail"></span>
      </div>

      <div class="main">
        <div class="rail">
          ${RAIL.map((r) => html`<div class="railitem ${r[0]}"><svg viewBox="0 0 30 30">${r[1]}</svg></div>`)}
        </div>
        ${this.navigatorEl()}
        <div class="work">
          <div class="tabstrip">
            <div class="doc">
              <svg viewBox="0 0 16 16"><path d="M2 13L6 2L10 5L15 11L12 15L6 12Z" fill="#bbb" stroke="#555"/></svg>
              <span>4-V3.prt</span>
              <svg class="pin" viewBox="0 0 12 12"><path d="M1 1H9L11 3V11H1ZM5 5H11" fill="none" stroke="#fff" stroke-width="1.5"/></svg>
              <span class="x">✕</span>
            </div>
          </div>
          <div class="view">
            ${this.sceneEl()}
            ${this.dialogEl()}
          </div>
        </div>
      </div>

      <div class="status">选择对象并使用 MB3，或者双击某一对象</div>
      <div class="task"><span class="a"></span><span class="b"></span><span class="clock">11:01</span></div>

      <div class="mark">
        <svg viewBox="0 0 72 82">
          <path d="M36 0L72 20V62L36 82L0 62V20Z" fill="rgba(60,165,225,.65)"/>
          <path d="M36 0L72 20L68 40C64 22 50 12 30 14L14 18Z" fill="rgba(185,205,215,.55)"/>
          <path d="M0 20L30 14C14 22 4 36 4 56L0 62Z" fill="rgba(170,200,220,.35)"/>
          <path d="M4 56C2 34 18 10 48 14M30 14C50 14 66 24 68 44M4 50C14 70 40 74 60 62" fill="none" stroke="rgba(255,255,255,.45)"/>
          <path d="M36 26L54 36L36 46L19 36Z" fill="#8fb7cb"/>
          <path d="M19 36L36 46V66L19 56Z" fill="#5b97ba"/>
          <path d="M54 36L36 46V66L54 56Z" fill="#2f83ad"/>
        </svg>
        <span class="wm"><b>3D</b>世界网</span>
      </div>
    `;
  }
}
